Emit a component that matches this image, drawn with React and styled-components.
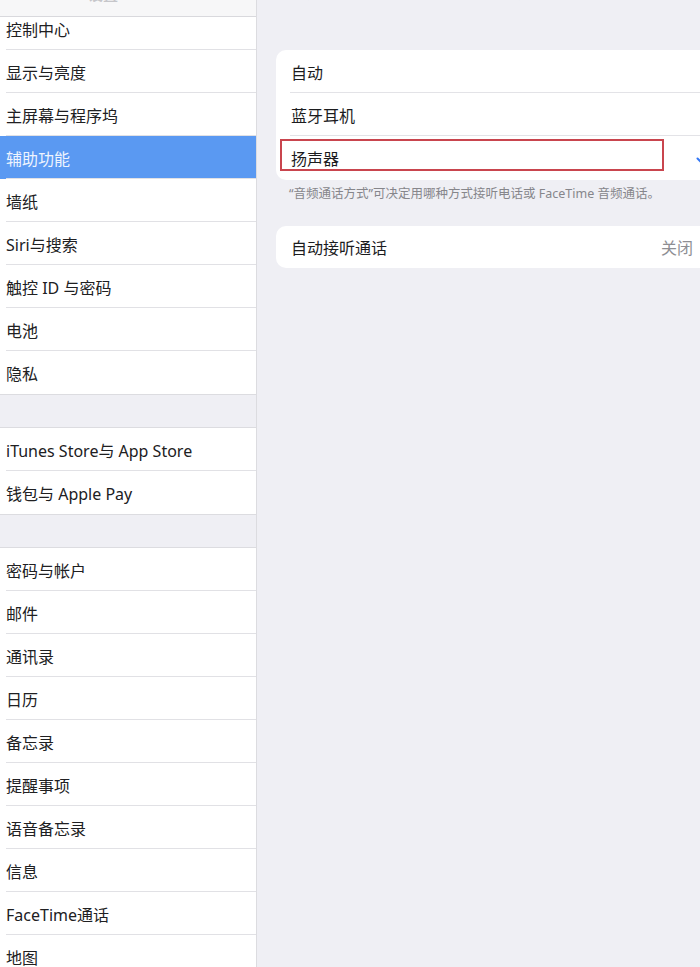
import React from 'react'
import styled, { createGlobalStyle } from 'styled-components'

const GlobalStyle = createGlobalStyle`
  html, body {
    margin: 0;
    padding: 0;
  }
  body {
    width: 700px;
    height: 967px;
    overflow: hidden;
    background: #efeff4;
    font-family: "Noto Sans", "Noto Sans CJK SC", sans-serif;
    color: #1c1c1e;
  }
`

const Page = styled.div`
    display: flex;
    height: 967px;
    overflow: hidden;
`

const Sidebar = styled.div`
    width: 256px;
    flex-shrink: 0;
    display: flex;
    flex-direction: column;
    background: #efeff4;
    border-right: 1px solid #dcdce0;
    overflow: hidden;
`

const SideHeader = styled.div`
    position: relative;
    z-index: 1;
    height: 17px;
    flex-shrink: 0;
    box-sizing: border-box;
    display: flex;
    align-items: flex-end;
    padding: 0 0 12px 88px;
    background: #f7f7f8;
    border-bottom: 1px solid #d9d9dd;
    overflow: hidden;
`

const SideTitle = styled.span`
    font-size: 15px;
    line-height: 20px;
    font-weight: 600;
    color: #c6c6ca;
`

const SideList = styled.div`
    margin-top: -10px;
    display: flex;
    flex-direction: column;
`

const Group = styled.div`
    background: #fff;
    border-top: 1px solid #dcdce0;
    border-bottom: 1px solid #dcdce0;
    margin-bottom: 32px;

    &:first-child {
        border-top: none;
    }
`

const SideRow = styled.div`
    height: 43px;
    box-sizing: border-box;
    display: flex;
    align-items: center;
    padding-left: 6px;
    font-size: 16px;
    position: relative;
    background: ${p => (p.$active ? '#5a99f2' : '#fff')};
    color: ${p => (p.$active ? '#eef4fe' : '#202022')};

    &:not(:last-child)::after {
        content: '';
        position: absolute;
        left: 6px;
        right: 0;
        bottom: 0;
        height: 1px;
        background: #e1e1e5;
    }
`

const Detail = styled.div`
    flex: 1;
    display: flex;
    flex-direction: column;
    padding-left: 19px;
    min-width: 0;
`

const DetailNav = styled.div`
    height: 14px;
    display: flex;
    align-items: flex-end;
    padding-bottom: 12px;
    box-sizing: border-box;
    overflow: hidden;
`

const BackLink = styled.span`
    display: flex;
    align-items: center;
    gap: 5px;
    font-size: 15px;
    line-height: 20px;
    color: #b5cff3;
    margin-left: -3px;
`

const NavTitle = styled.span`
    margin-left: 132px;
    font-size: 17px;
    line-height: 20px;
    font-weight: 600;
    color: #d2d2d6;
`

const Card = styled.div`
    background: #fff;
    border-radius: 10px;
    margin-right: -20px;
    margin-top: ${p => p.$top || 0}px;
    overflow: hidden;
`

const Row = styled.div`
    height: ${p => p.$h || 43}px;
    box-sizing: border-box;
    display: flex;
    align-items: center;
    justify-content: space-between;
    padding: 0 10px 0 15px;
    font-size: 16px;
    position: relative;
    color: #1c1c1e;

    &:not(:last-child)::after {
        content: '';
        position: absolute;
        left: 14px;
        right: 0;
        bottom: 0;
        height: 1px;
        background: #e3e3e7;
    }
`

const Highlight = styled.div`
    position: absolute;
    left: 4px;
    top: 3px;
    width: 384px;
    height: 32px;
    box-sizing: border-box;
    border: 2px solid #c9454e;
    pointer-events: none;
`

const Value = styled.span`
    display: flex;
    align-items: center;
    gap: 8px;
    color: #8e8e93;
`

const Note = styled.p`
    margin: 5px 0 23px;
    padding-left: 13px;
    font-size: 12.5px;
    line-height: 18px;
    color: #86868b;
    white-space: nowrap;
`

const Check = () => (
    <svg width="14" height="12" viewBox="0 0 14 12">
        <polyline points="1.5,6.5 5,10 12.5,1.5" fill="none" stroke="#3478f6" strokeWidth="2" strokeLinecap="round" strokeLinejoin="round" />
    </svg>
)

const Chevron = ({ color = '#c7c7cc', left }) => (
    <svg width="9" height="14" viewBox="0 0 9 14">
        <polyline points={left ? '7.5,1.5 2,7 7.5,12.5' : '1.5,1.5 7,7 1.5,12.5'} fill="none" stroke={color} strokeWidth="2" strokeLinecap="round" strokeLinejoin="round" />
    </svg>
)

const groups = [
    ['控制中心', '显示与亮度', '主屏幕与程序坞', '辅助功能', '墙纸', 'Siri与搜索', '触控 ID 与密码', '电池', '隐私'],
    ['iTunes Store与 App Store', '钱包与 Apple Pay'],
    ['密码与帐户', '邮件', '通讯录', '日历', '备忘录', '提醒事项', '语音备忘录', '信息', 'FaceTime通话', '地图'],
]

function App() {
    return (
        <>
            <GlobalStyle />
            <Page>
                <Sidebar>
                    <SideHeader>
                        <SideTitle>设置</SideTitle>
                    </SideHeader>
                    <SideList>
                        {groups.map((g, i) => (
                            <Group key={i}>
                                {g.map(label => (
                                    <SideRow key={label} $active={label === '辅助功能'}>{label}</SideRow>
                                ))}
                            </Group>
                        ))}
                    </SideList>
                </Sidebar>

                <Detail>
                    <DetailNav>
                        <BackLink><Chevron left color="#3478f6" />辅助</BackLink>
                        <NavTitle>音频通话方式</NavTitle>
                    </DetailNav>

                    <Card $top={36}>
                        <Row>自动</Row>
                        <Row>蓝牙耳机</Row>
                        <Row $h={44}>
                            扬声器
                            <Check />
                            <Highlight />
                        </Row>
                    </Card>
                    <Note>“音频通话方式”可决定用哪种方式接听电话或 FaceTime 音频通话。</Note>

                    <Card>
                        <Row $h={42}>
                            自动接听通话
                            <Value>关闭<Chevron /></Value>
                        </Row>
                    </Card>
                </Detail>
            </Page>
        </>
    )
}

export default App
